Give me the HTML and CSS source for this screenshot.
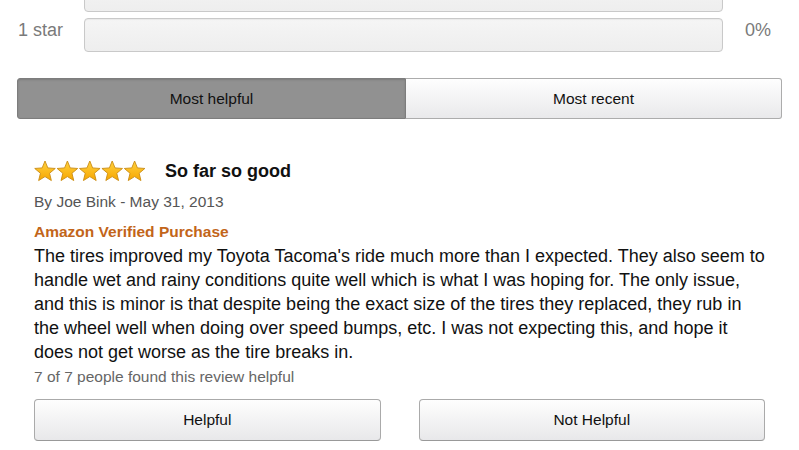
FILE: index.html
```html
<!DOCTYPE html>
<html lang="en">
<head>
<meta charset="utf-8">
<title>Customer Reviews</title>
<link rel="stylesheet" href="styles.css">
</head>
<body>
<div class="page">
  <section class="histogram">
    <div class="hist-row hist-row-first">
      <div class="hist-label"></div>
      <div class="hist-bar"></div>
      <div class="hist-pct"></div>
    </div>
    <div class="hist-row">
      <div class="hist-label">1 star</div>
      <div class="hist-bar"></div>
      <div class="hist-pct">0%</div>
    </div>
  </section>

  <nav class="tabs">
    <button class="tab tab-active">Most helpful</button>
    <button class="tab">Most recent</button>
  </nav>

  <article class="review">
    <header class="review-head">
      <svg class="stars" width="112" height="22" viewBox="0 0 112 22" aria-label="5 out of 5 stars">
        <defs>
          <linearGradient id="starFill" x1="0" y1="0" x2="0" y2="1">
            <stop offset="0" stop-color="#ffd23f"/>
            <stop offset="1" stop-color="#f7a600"/>
          </linearGradient>
          <polygon id="star" points="11,1 13.82,7.92 21.27,8.46 15.56,13.28 17.35,20.54 11,16.6 4.65,20.54 6.44,13.28 0.73,8.46 8.18,7.92" fill="url(#starFill)" stroke="#c98b12" stroke-width="0.9" stroke-linejoin="round"/>
        </defs>
        <use href="#star" x="0"/>
        <use href="#star" x="22.4"/>
        <use href="#star" x="44.8"/>
        <use href="#star" x="67.2"/>
        <use href="#star" x="89.6"/>
      </svg>
      <h2 class="review-title">So far so good</h2>
    </header>
    <p class="review-byline">By Joe Bink - May 31, 2013</p>
    <p class="review-verified">Amazon Verified Purchase</p>
    <p class="review-body">The tires improved my Toyota Tacoma's ride much more than I expected. They also seem to handle wet and rainy conditions quite well which is what I was hoping for. The only issue, and this is minor is that despite being the exact size of the tires they replaced, they rub in the wheel well when doing over speed bumps, etc. I was not expecting this, and hope it does not get worse as the tire breaks in.</p>
    <p class="review-helpful">7 of 7 people found this review helpful</p>
    <div class="vote">
      <button class="vote-btn">Helpful</button>
      <button class="vote-btn">Not Helpful</button>
    </div>
  </article>
</div>
</body>
</html>
```

FILE: styles.css
```css
* { box-sizing: border-box; }

html, body {
  margin: 0;
  padding: 0;
  background: #ffffff;
}

body {
  font-family: "Liberation Sans", Arial, Helvetica, sans-serif;
  color: #111111;
  overflow: hidden;
}

.page {
  width: 799px;
  height: 450px;
  overflow: hidden;
}

/* Histogram */
.histogram {
  display: flex;
  flex-direction: column;
  gap: 6px;
  margin-top: -22px;
}

.hist-row {
  display: flex;
  height: 34px;
}

.hist-label {
  width: 84px;
  padding-left: 18px;
  padding-top: 3px;
  font-size: 18px;
  line-height: 18px;
  color: #7a7a7a;
}

.hist-bar {
  flex: 1;
  border: 1px solid #c9c9c9;
  border-radius: 4px;
  background: linear-gradient(#f5f5f5, #eeeeee);
  box-shadow: inset 0 1px 1px rgba(0,0,0,0.05);
}

.hist-pct {
  width: 76px;
  padding-left: 22px;
  padding-top: 3px;
  font-size: 18px;
  line-height: 18px;
  color: #7a7a7a;
}

/* Tabs */
.tabs {
  display: grid;
  grid-template-columns: 389px 1fr;
  margin: 26px 17px 0 17px;
  height: 41px;
}

.tab {
  font-family: inherit;
  font-size: 15.5px;
  color: #111111;
  border: 1px solid #acacac;
  background: linear-gradient(#fefefe, #e9e9eb);
  margin: 0;
  padding: 0;
  cursor: pointer;
}

.tab:first-child {
  border-radius: 3px 0 0 3px;
}

.tab:last-child {
  border-left: none;
  border-radius: 0 3px 3px 0;
}

.tab-active {
  background: #919191;
  border-color: #7d7d7d;
  box-shadow: inset 0 1px 2px rgba(0,0,0,0.15);
}

/* Review */
.review {
  padding: 41px 32px 0 34px;
}

.review-head {
  display: flex;
  align-items: center;
  gap: 19px;
  height: 22px;
}

.stars {
  display: block;
  flex: none;
}

.review-title {
  margin: 0;
  font-size: 18px;
  font-weight: bold;
  line-height: 22px;
  color: #111111;
}

.review-byline {
  margin: 10px 0 0 0;
  font-size: 15.5px;
  line-height: 20px;
  color: #555555;
}

.review-verified {
  margin: 10px 0 0 0;
  font-size: 15.5px;
  line-height: 20px;
  font-weight: bold;
  color: #c2651a;
}

.review-body {
  margin: 2px 0 0 0;
  font-size: 18px;
  line-height: 24px;
  color: #111111;
}

.review-helpful {
  margin: 3px 0 0 0;
  font-size: 15.5px;
  line-height: 20px;
  color: #666666;
}

.vote {
  display: flex;
  gap: 38px;
  margin-top: 12px;
  padding-right: 2px;
}

.vote-btn {
  flex: 1;
  height: 42px;
  font-family: inherit;
  font-size: 15.5px;
  color: #111111;
  border: 1px solid #aaaaaa;
  border-bottom-color: #999999;
  border-radius: 4px;
  background: linear-gradient(#fefefe, #e8e8ea);
  padding: 0;
  cursor: pointer;
}
```
